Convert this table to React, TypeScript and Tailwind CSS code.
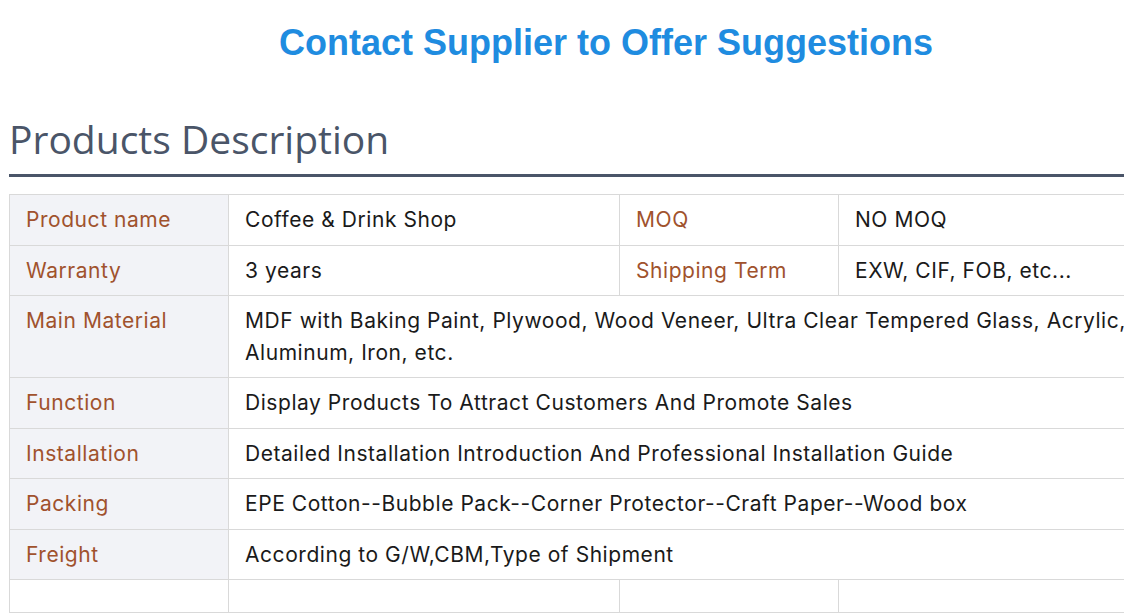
import React from "react";

type Row = { label?: string; value?: string; label2?: string; value2?: string; span?: boolean; empty?: boolean };

const rows: Row[] = [
  { label: "Product name", value: "Coffee & Drink Shop", label2: "MOQ", value2: "NO MOQ" },
  { label: "Warranty", value: "3 years", label2: "Shipping Term", value2: "EXW, CIF, FOB, etc..." },
  {
    label: "Main Material",
    value: "MDF with Baking Paint, Plywood, Wood Veneer, Ultra Clear Tempered Glass, Acrylic, Aluminum, Iron, etc.",
    span: true,
  },
  { label: "Function", value: "Display Products To Attract Customers And Promote Sales", span: true },
  { label: "Installation", value: "Detailed Installation Introduction And Professional Installation Guide", span: true },
  { label: "Packing", value: "EPE Cotton--Bubble Pack--Corner Protector--Craft Paper--Wood box", span: true },
  { label: "Freight", value: "According to G/W,CBM,Type of Shipment", span: true },
  { empty: true },
];

const labelCls = "border border-[#d9d9d9] px-[16px] py-[9px] align-top text-[#a0522d]";
const valueCls = "border border-[#d9d9d9] px-[16px] py-[9px] align-top text-[#1a1a1a]";

export default function App() {
  return (
    <div className="min-h-[614px] w-[1134px] overflow-hidden bg-white">
      <div className="flex h-[88px] justify-center pl-[78px] pt-[21px]">
        <h2 className="whitespace-nowrap font-['Liberation_Sans',Arial,sans-serif] text-[36px] font-bold leading-[44px] text-[#1f8ce0]">
          Contact Supplier to Offer Suggestions
        </h2>
      </div>
      <div className="ml-[9px] w-[1115px]">
        <h1 className="whitespace-nowrap pt-[23px] font-['Open_Sans',sans-serif] text-[39px] font-normal leading-[56px] text-[#4a5568]">
          Products Description
        </h1>
        <div className="mt-[7px] h-[3px] bg-[#4a5568]" />
        <div className="mt-[17px] overflow-hidden">
          <table className="w-[1220px] table-fixed border-collapse font-['Inter',sans-serif] text-[21px] leading-[31.5px] tracking-[0.55px]">
            <colgroup>
              <col className="w-[219px]" />
              <col className="w-[391px]" />
              <col className="w-[219px]" />
              <col className="w-[391px]" />
            </colgroup>
            <tbody>
              {rows.map((r, i) =>
                r.empty ? (
                  <tr key={i} className="h-[33px]">
                    <td className="border border-[#d9d9d9]" />
                    <td className="border border-[#d9d9d9]" />
                    <td className="border border-[#d9d9d9]" />
                    <td className="border border-[#d9d9d9]" />
                  </tr>
                ) : (
                  <tr key={i}>
                    <td className={`${labelCls} bg-[#f2f3f7]`}>{r.label}</td>
                    {r.span ? (
                      <td colSpan={3} className={valueCls}>
                        {r.value}
                      </td>
                    ) : (
                      <>
                        <td className={valueCls}>{r.value}</td>
                        <td className={labelCls}>{r.label2}</td>
                        <td className={valueCls}>{r.value2}</td>
                      </>
                    )}
                  </tr>
                )
              )}
            </tbody>
          </table>
        </div>
      </div>
    </div>
  );
}
